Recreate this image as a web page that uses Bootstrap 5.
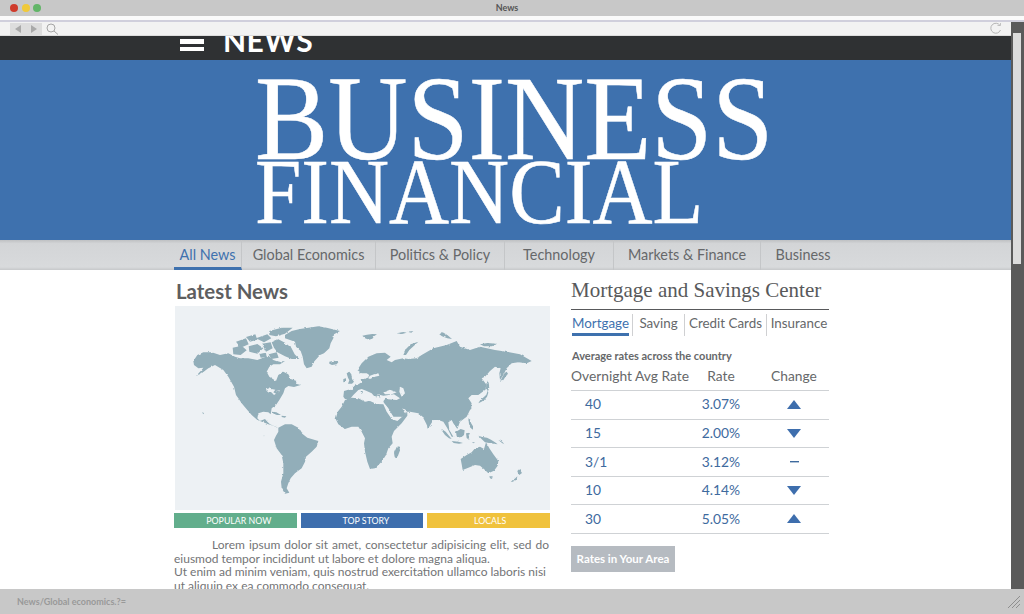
<!DOCTYPE html>
<html lang="en">
<head>
  <meta charset="UTF-8" />
  <title>News</title>
  <link href="https://cdn.jsdelivr.net/npm/bootstrap@5.3.3/dist/css/bootstrap.min.css" rel="stylesheet" />
  <style>
    html, body { height: 614px; overflow: hidden; }
    body { font-family: Lato, "Open Sans", sans-serif; background: #fff; color: #6d6e70; }
    .title-bar { height: 16px; background: #c8c8c8; padding-left: 10px; }
    .dot { width: 8px; height: 8px; border-radius: 50%; margin-right: 3.5px; }
    .title-side { width: 100px; }
    .title-text { font-size: 9px; font-weight: 700; color: #555; line-height: 16px; padding-right: 20px; }
    .title-strip { height: 6px; background: #fafafa; border-bottom: 2px solid #d0cfdc; }
    .page-area { height: 567px; }
    .tool-bar { height: 14px; background: #f2f2f2; padding: 0 9px 0 10px; border-bottom: 1px solid #ddd; }
    .back-fwd { width: 32px; height: 12px; background: #ddd; }
    .dark-band { height: 24px; background: #2f3133; padding-left: 180px; overflow: hidden; }
    .burger { width: 24px; margin-bottom: 9px; }
    .burger-bar { height: 4.5px; background: #fff; margin-top: 3px; }
    .news-word { font-size: 30px; line-height: 30px; font-weight: 700; color: #fff; margin-left: 19px; margin-bottom: 5.5px; letter-spacing: .5px; }
    .hero { height: 180px; background: #3e71ae; color: #fff; font-family: "Liberation Serif", serif; padding-left: 255px; -webkit-text-stroke: .5px #fff; }
    .hero-top { font-size: 121px; line-height: 84px; height: 100px; padding-top: 16px; }
    .hero-bottom { font-size: 94px; line-height: 62px; }
    .hero-top span, .hero-bottom span { display: inline-block; transform-origin: left center; white-space: nowrap; }
    .hero-top span { transform: scaleX(.907); }
    .hero-bottom span { transform: scaleX(.885); }
    .main-nav { height: 30px; background: linear-gradient(#bfc1c3, #d3d5d7 12%, #d8dadc 90%, #c6c8ca); padding-left: 174px; }
    .main-nav a { display: block; height: 30px; line-height: 29px; font-size: 14.4px; color: #66686a; text-decoration: none; text-align: center; border-right: 1px solid #c4c6c8; }
    .main-nav a:last-child { border-right: 0; }
    .main-nav a.current { color: #3e71ae; border-bottom: 3px solid #3e71ae; }
    .content-area { padding: 0 0 0 174px; height: 319px; overflow: hidden; }
    .left-col { width: 376px; margin-right: 21px; }
    .right-col { width: 258px; }
    .latest-head { font-size: 20.4px; font-weight: 700; line-height: 26px; margin: 8px 0 2px 2px; color: #5d5e60; }
    .map-box { display: block; width: 375px; height: 204px; margin-left: 1px; background: #edf1f4; }
    .tag-row { gap: 4px; margin-top: 3px; height: 15px; }
    .tag-item { flex: 0 0 122.67px; font-size: 8.8px; line-height: 15px; color: #fff; text-align: center; }
    .tag-green { background: #62ae8c; padding-left: 7px; }
    .tag-blue { background: #3e6ead; padding-left: 8px; }
    .tag-yellow { background: #f0c23d; padding-left: 3px; }
    .story-text { font-size: 12px; line-height: 13.7px; margin: 10px 0 0; width: 375px; color: #737476; }
    .story-first { display: block; text-align: justify; text-align-last: justify; text-indent: 38px; }
    .story-line { display: block; }
    .center-head { font-family: "Liberation Serif", serif; font-size: 21px; line-height: 28px; color: #58595b; margin: 6px 0 0 0; padding-bottom: 5px; border-bottom: 1px solid #58595b; white-space: nowrap; }
    .rate-tabs { margin-top: 4px; height: 22px; }
    .rate-tabs a { font-size: 13.4px; line-height: 18px; color: #66686a; text-decoration: none; height: 22px; border-right: 1px solid #cfd0d2; text-align: center; white-space: nowrap; }
    .rate-tabs a:last-child { border-right: 0; padding-left: 2px; }
    .rate-tabs a.current { color: #3e71ae; padding-right: 2px; }
    .tab-line { display: block; width: 57px; height: 3px; margin: 1px 0 0 1px; background: #3e71ae; }
    .rate-sub { font-size: 11px; font-weight: 700; line-height: 14px; color: #66686a; margin: 13px 0 0 1px; }
    .rate-table { width: 258px; margin: 0; table-layout: fixed; }
    .rate-table th, .rate-table td { padding: 0; font-weight: 400; border-bottom: 1.5px solid #cfd2d5; font-size: 13.8px; }
    .rate-table th { height: 27.5px; color: #66686a; white-space: nowrap; }
    .rate-table td { height: 28.6px; color: #3e6a9e; }
    .rate-table .col-first { padding-left: 14px; }
    .rate-table .col-mark { padding-left: 10px; }
    .rate-mark { margin-bottom: 3px; }
    .btn-area { display: block; width: 104px; height: 26px; margin-top: 12px; padding: 0; line-height: 26px; font-size: 11.5px; font-weight: 700; color: #fff; background: #b6bbc1; border: 0; border-radius: 0; }
    .status-bar { height: 25px; background: #c8c8c8; padding: 0 4px 0 17px; }
    .status-text { font-size: 9px; font-weight: 700; color: #999; }
    .side-scroll { width: 13px; background: #5a5a5a; padding: 11px 3px 0 2px; }
    .side-thumb { height: 231px; background: #dcdcdc; }
  </style>
</head>
<body class="d-flex flex-column">
  <div class="title-bar d-flex align-items-center">
    <div class="title-side d-flex">
      <span class="dot" style="background:#cf3b2c"></span>
      <span class="dot" style="background:#f0c93a"></span>
      <span class="dot" style="background:#62b568"></span>
    </div>
    <div class="title-text flex-grow-1 text-center">News</div>
    <div class="title-side"></div>
  </div>
  <div class="title-strip"></div>

  <div class="page-area d-flex">
    <div class="flex-grow-1 overflow-hidden">
      <div class="tool-bar d-flex align-items-center justify-content-between">
        <div class="d-flex align-items-center">
          <div class="back-fwd d-flex align-items-center justify-content-around">
            <svg width="6" height="8" viewBox="0 0 6 8"><path d="M6 0v8L0 4z" fill="#a9a9a9"/></svg>
            <svg width="6" height="8" viewBox="0 0 6 8"><path d="M0 0v8l6-4z" fill="#a9a9a9"/></svg>
          </div>
          <svg class="ms-1" width="13" height="12" viewBox="0 0 13 12" fill="none" stroke="#a5a5a5" stroke-width="1"><circle cx="5" cy="5" r="4"/><path d="M8 8l4 3.5"/></svg>
        </div>
        <svg width="13" height="13" viewBox="0 0 13 13" fill="none" stroke="#b5b5b5" stroke-width="1"><path d="M11 3.5A5 5 0 1 0 11.5 8"/><path d="M8.5 3.5h3v-2.5" stroke-width=".8"/></svg>
      </div>

      <div class="dark-band d-flex align-items-end">
        <div class="burger"><div class="burger-bar"></div><div class="burger-bar"></div></div>
        <div class="news-word">NEWS</div>
      </div>

      <div class="hero">
        <div class="hero-top"><span>BUSINESS</span></div>
        <div class="hero-bottom"><span>FINANCIAL</span></div>
      </div>

      <nav class="main-nav d-flex">
        <a class="current" href="#" style="width:68px">All News</a>
        <a href="#" style="width:134px">Global Economics</a>
        <a href="#" style="width:129px">Politics &amp; Policy</a>
        <a href="#" style="width:109px">Technology</a>
        <a href="#" style="width:147px">Markets &amp; Finance</a>
        <a href="#" style="width:84px">Business</a>
      </nav>

      <div class="content-area d-flex">
        <div class="left-col">
          <h2 class="latest-head">Latest News</h2>
          <svg class="map-box" viewBox="15 3 1125 612" fill="#92aeb9">
            <defs>
              <filter id="rough-coast" x="0" y="0" width="100%" height="100%">
                <feTurbulence type="fractalNoise" baseFrequency=".09" numOctaves="2" seed="4"/>
                <feDisplacementMap in="SourceGraphic" scale="7" xChannelSelector="R" yChannelSelector="G"/>
              </filter>
            </defs>
            <g filter="url(#rough-coast)">
            <!-- North America -->
            <path d="M70 168L82 150 100 142 125 142 150 150 175 145 195 155 210 160 235 160 262 165 280 158 295 152 310 165 325 170 345 168 330 178 310 178 298 185 290 200 298 215 318 228 325 210 340 200 355 208 362 222 380 228 378 236 392 240 372 246 355 243 345 250 340 265 328 285 318 300 305 310 302 328 295 322 280 320 265 325 262 340 270 348 285 342 292 350 300 358 318 365 325 370 310 362 295 358 280 352 262 345 245 330 232 315 215 295 205 280 198 270 192 245 175 215 160 195 135 180 115 190 95 205 78 213 95 195 100 188 85 190 72 180z"/>
            <path d="M288 250L300 246 305 252 316 254 310 262 318 266 312 270 304 262 298 264 290 258z" fill="#edf1f4"/>
            <path d="M318 258L330 256 326 262z" fill="#edf1f4"/>
            <!-- Arctic islands -->
            <path d="M298 78L335 68 368 68 345 86 318 94 298 90zM305 112L325 103 345 113 364 128 374 148 388 162 365 162 345 154 322 142 312 128zM236 124L262 117 280 130 262 146 238 140zM198 110L228 100 236 118 212 128zM188 128L215 122 230 136 212 150 190 148zM258 100L292 88 304 100 282 112zM276 116L302 112 308 130 288 140zM228 96L256 88 262 104 240 110zM296 148L320 142 326 158 304 162zM268 146L288 144 290 156 272 158z"/>
            <!-- Greenland -->
            <path d="M345 90L365 78 390 72 415 68 445 64 470 68 510 78 492 88 490 100 482 115 478 130 462 145 450 150 432 170 425 185 410 190 402 178 398 155 392 138 378 125 375 110 345 100z"/>
            <path d="M478 170L492 167 506 170 500 178 486 180 478 176zM577 92L591 89 607 87 621 88 613 93 607 101 597 104 585 100zM680 85L700 81 710 83 696 87zM712 80L730 78 724 83zM808 88L818 82 832 90 846 102 832 100 816 94zM930 118L952 114 978 116 966 124 942 124zM700 150L708 132 722 118 745 110 732 122 718 135 708 150z"/>
            <path d="M305 320L319 322 333 330 321 330 311 326zM335 332L349 334 345 338 335 336z"/>
            <!-- South America -->
            <path d="M325 368L345 358 365 358 385 368 395 385 412 398 445 408 440 425 425 440 408 455 405 470 395 490 375 505 362 520 355 535 350 550 358 563 345 566 335 550 333 530 340 505 340 475 335 450 320 430 312 405 318 392 325 380z"/>
            <!-- Africa -->
            <path d="M525 285L545 278 565 280 585 290 600 288 620 297 640 298 650 320 665 342 682 348 712 322 712 332 695 355 672 378 665 395 668 415 655 430 648 450 635 470 615 490 600 492 592 470 585 440 582 415 585 400 575 380 565 365 545 365 525 372 505 358 497 342 503 320 515 305z"/>
            <path d="M680 426L688 424 690 436 684 452 678 460 674 456 672 444z"/>
            <!-- Eurasia -->
            <path d="M520 275L522 258 535 254 548 255 552 243 565 238 575 232 572 222 585 222 592 218 600 222 615 215 628 212 625 205 612 208 600 212 590 225 598 210 590 205 575 205 562 195 575 175 595 155 620 145 645 143 662 155 650 165 665 172 675 165 700 160 715 162 740 160 755 150 790 130 830 120 860 108 870 125 900 135 930 125 975 135 1010 140 1050 148 1085 168 1070 175 1045 172 1025 175 1010 190 1000 210 990 225 988 205 992 190 975 185 960 198 945 215 935 220 950 240 945 255 925 270 905 270 895 280 905 295 900 315 890 335 870 350 862 372 850 355 845 345 835 352 838 375 850 395 845 395 832 370 820 350 805 345 790 345 775 370 768 355 758 335 745 325 720 320 712 320 700 335 670 335 655 310 645 298 640 290 645 282 680 285 690 280 672 268 640 272 622 268 618 280 605 265 590 258 575 252 565 255 550 270 540 282 525 282z"/>
            <path d="M640 262L660 254 680 262 665 268 645 268zM690 245L700 250 705 265 695 275 688 260z" fill="#edf1f4"/>
            <path d="M697 310L712 320 704 324z" fill="#edf1f4"/>
            <path d="M645 300L657 322 672 342 686 342" fill="none" stroke="#edf1f4" stroke-width="4"/>
            <!-- British isles -->
            <path d="M530 205L538 200 544 208 546 222 552 230 546 236 534 236 538 226 534 218zM520 222L528 220 528 230 520 232z"/>
            <path d="M618 268L626 270 632 280 624 274zM572 258L578 258 578 264 574 266zM640 286L648 286 644 288z"/>
            <!-- Sakhalin / Japan -->
            <path d="M950 225L956 233 958 247 954 259 948 249zM925 295L931 285 941 277 949 269 953 257 955 263 951 275 943 285 933 291zM990 230L996 218 1004 204 1010 200 1014 206 1006 216 998 228z"/>
            <path d="M900 300L904 302 904 312 900 314zM885 325L891 325 889 331z"/>
            <!-- Indonesia / Philippines / New Guinea -->
            <path d="M815 372L827 380 837 392 845 402 837 400 825 390 815 376zM845 408L865 410 879 414 867 416 851 414zM858 380L872 372 884 376 882 390 872 398 860 394zM888 385L900 383 896 393 898 405 890 399zM895 340L901 344 903 354 909 364 909 374 901 368 897 356zM925 392L937 396 951 398 963 404 975 412 983 418 971 416 957 414 945 412 937 404zM905 412L915 412 911 415zM985 405L995 409 1003 417 997 415z"/>
            <path d="M772 362L777 366 777 372 772 370z"/>
            <!-- Australia -->
            <path d="M872 462L890 450 905 442 915 430 930 425 942 432 948 412 958 430 970 448 985 468 983 482 972 497 955 505 945 495 930 482 915 480 895 488 878 495 875 478z"/>
            <path d="M958 514L968 514 966 522 960 520z"/>
            <path d="M1042 498L1048 492 1056 504 1048 510 1044 504zM1022 530L1036 520 1042 514 1040 524 1028 530z"/>
            <path d="M96 322L102 324 100 328zM280 392L284 392 282 394z"/>
            </g>
          </svg>
          <div class="tag-row d-flex">
            <div class="tag-item tag-green">POPULAR NOW</div>
            <div class="tag-item tag-blue">TOP STORY</div>
            <div class="tag-item tag-yellow">LOCALS</div>
          </div>
          <p class="story-text">
            <span class="story-first">Lorem ipsum dolor sit amet, consectetur adipisicing elit, sed do</span>
            <span class="story-line">eiusmod tempor incididunt ut labore et dolore magna aliqua.</span>
            <span class="story-line">Ut enim ad minim veniam, quis nostrud exercitation ullamco laboris nisi</span>
            <span class="story-line">ut aliquip ex ea commodo consequat.</span>
          </p>
        </div>

        <div class="right-col">
          <h3 class="center-head">Mortgage and Savings Center</h3>
          <div class="rate-tabs d-flex">
            <a class="current" href="#" style="width:62px">Mortgage<span class="tab-line"></span></a>
            <a href="#" style="width:52px">Saving</a>
            <a href="#" style="width:82px">Credit Cards</a>
            <a href="#" style="width:62px">Insurance</a>
          </div>
          <div class="rate-sub">Average rates across the country</div>
          <table class="rate-table">
            <thead>
              <tr>
                <th style="width:122px">Overnight Avg Rate</th>
                <th class="text-center" style="width:56px">Rate</th>
                <th class="text-center col-mark">Change</th>
              </tr>
            </thead>
            <tbody id="rate-body"></tbody>
          </table>
          <button class="btn btn-area" type="button">Rates in Your Area</button>
        </div>
      </div>
    </div>
    <div class="side-scroll"><div class="side-thumb"></div></div>
  </div>

  <div class="status-bar d-flex align-items-center justify-content-between">
    <span class="status-text">News/Global economics.?=</span>
    <svg width="12" height="12" viewBox="0 0 12 12" stroke="#8e8e8e" stroke-width="1"><path d="M0 12L12 0M4 12l8-8M8 12l4-4"/></svg>
  </div>

  <script src="https://cdn.jsdelivr.net/npm/bootstrap@5.3.3/dist/js/bootstrap.bundle.min.js"></script>
  <script>
    const rates = [
      ["40", "3.07%", "up"],
      ["15", "2.00%", "down"],
      ["3/1", "3.12%", "flat"],
      ["10", "4.14%", "down"],
      ["30", "5.05%", "up"]
    ];
    const marks = {
      up: '<svg class="rate-mark" width="14" height="9" viewBox="0 0 14 9"><path d="M7 0l7 9H0z" fill="#3e6ead"/></svg>',
      down: '<svg class="rate-mark" width="14" height="9" viewBox="0 0 14 9"><path d="M0 0h14L7 9z" fill="#3e6ead"/></svg>',
      flat: '<svg class="rate-mark" width="9" height="2" viewBox="0 0 9 2"><path d="M0 0h9v1.4H0z" fill="#3e6a9e"/></svg>'
    };
    document.getElementById("rate-body").innerHTML = rates.map(r => `
      <tr>
        <td class="col-first">${r[0]}</td>
        <td class="text-center">${r[1]}</td>
        <td class="text-center col-mark">${marks[r[2]]}</td>
      </tr>`).join("");
  </script>
</body>
</html>
